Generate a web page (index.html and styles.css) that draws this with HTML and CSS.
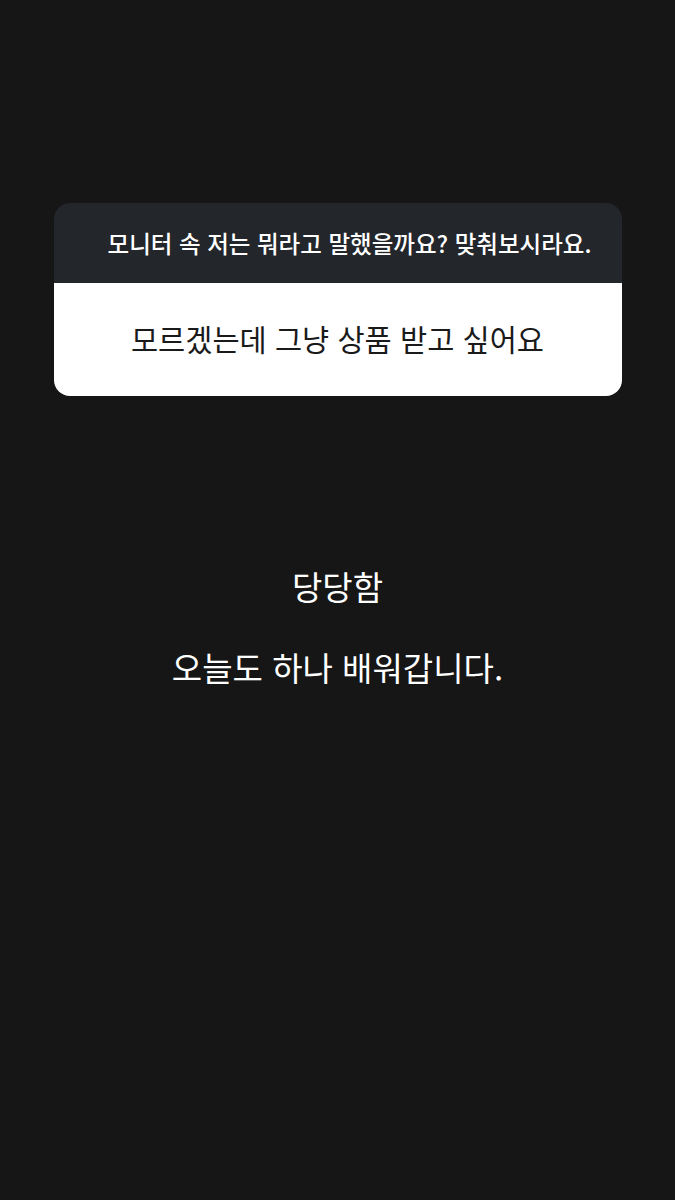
FILE: index.html
```html
<!DOCTYPE html>
<html lang="ko">
<head>
  <meta charset="UTF-8">
  <meta name="viewport" content="width=device-width, initial-scale=1.0">
  <title>Story</title>
  <link rel="stylesheet" href="styles.css">
</head>
<body>
<div class="story">
  <div class="question">
    <div class="question-title">모니터 속 저는 뭐라고 말했을까요? 맞춰보시라요.</div>
    <div class="question-answer">모르겠는데 그냥 상품 받고 싶어요</div>
  </div>
  <div class="caption">
    <p class="line1">당당함</p>
    <p class="line2">오늘도 하나 배워갑니다.</p>
  </div>
</div>
</body>
</html>
```

FILE: styles.css
```css
*{
  padding: 0;
  margin: 0;
  box-sizing: border-box;
}
body{
  background-color: #161616;
  font-family: "Noto Sans CJK KR", "Noto Sans", sans-serif;
  width: 675px;
  height: 1200px;
  overflow: hidden;
}
.story{
  padding-top: 203px;
  display: flex;
  flex-direction: column;
  align-items: center;
}
.question{
  width: 568px;
  border-radius: 16px;
  overflow: hidden;
}
.question-title{
  height: 80px;
  background-color: #23262b;
  color: #ffffff;
  font-size: 23.5px;
  font-weight: 500;
  white-space: nowrap;
  display: flex;
  align-items: center;
  justify-content: center;
  padding-left: 24px;
}
.question-answer{
  height: 113px;
  background-color: #ffffff;
  color: #1a1a1a;
  font-size: 29.5px;
  white-space: nowrap;
  display: flex;
  align-items: center;
  justify-content: center;
  padding-bottom: 3px;
}
.caption{
  margin-top: 166px;
  text-align: center;
  color: #ffffff;
  font-size: 33px;
}
.line1{
  line-height: 48px;
}
.line2{
  margin-top: 33px;
  line-height: 48px;
}
```
